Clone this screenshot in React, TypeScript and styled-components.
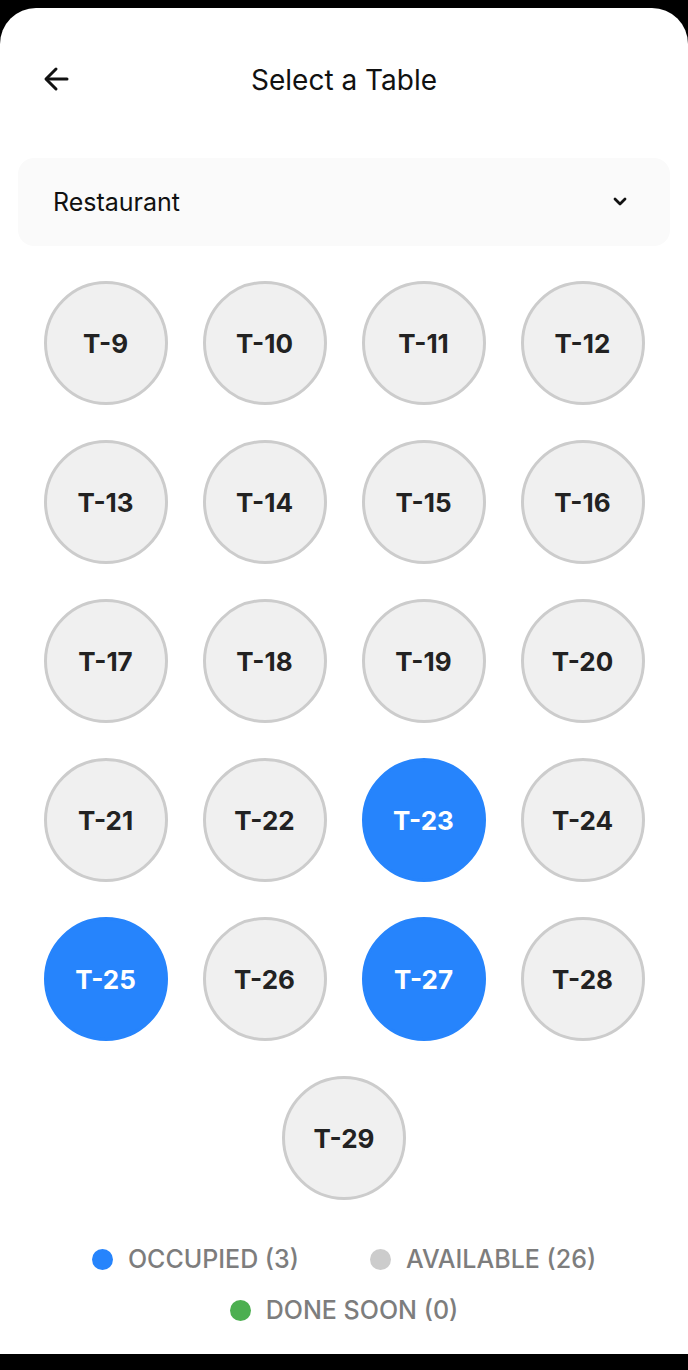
import styled, { createGlobalStyle } from 'styled-components';

const GlobalStyle = createGlobalStyle`
  body {
    margin: 0;
    background: #000;
    font-family: Inter, "Noto Sans", sans-serif;
  }
`;

const Sheet = styled.div`
  margin-top: 8px;
  height: 1346px;
  background: #fff;
  border-radius: 36px 36px 0 0;
  display: flex;
  flex-direction: column;`;

const Header = styled.div`
  height: 144px;
  display: flex;
  align-items: center;
  justify-content: center;
  position: relative;`;

const BackButton = styled.button`
  position: absolute;
  left: 43px;
  top: 58px;
  border: none;
  background: none;
  padding: 0;
  display: flex;`;

const Title = styled.h1`
  margin: 0;
  font-size: 28px;
  font-weight: 400;
  color: #111;`;

const Content = styled.div`
  padding: 6px 18px 0;
  display: flex;
  flex-direction: column;`;

const Dropdown = styled.div`
  height: 88px;
  background: #fafafa;
  border-radius: 16px;
  display: flex;
  align-items: center;
  justify-content: space-between;
  padding: 0 42px 0 35px;`;

const DropdownLabel = styled.span`
  font-size: 25px;
  color: #111;`;

const Grid = styled.div`
  margin-top: 35px;
  display: flex;
  flex-wrap: wrap;
  justify-content: center;
  gap: 35px;
  padding: 0 7px;`;

const TableCircle = styled.div<{ $occupied?: boolean }>`
  width: 124px;
  height: 124px;
  box-sizing: border-box;
  border-radius: 50%;
  display: flex;
  align-items: center;
  justify-content: center;
  font-size: 26px;
  font-weight: 700;
  background: ${(p) => (p.$occupied ? '#2684fc' : '#f0f0f0')};
  color: ${(p) => (p.$occupied ? '#fff' : '#222')};
  border: 3px solid ${(p) => (p.$occupied ? '#2684fc' : '#cccccc')};`;

const Legend = styled.div`
  margin-top: 44px;
  display: flex;
  flex-direction: column;
  align-items: center;
  gap: 21px;`;

const LegendRow = styled.div`
  display: flex;
  gap: 71px;
  justify-content: center;`;

const LegendItem = styled.div`
  display: flex;
  align-items: center;
  gap: 15px;
  font-size: 25px;
  font-weight: 500;
  color: #7d7d7d;
  line-height: 30px;`;

const Dot = styled.span<{ $color: string }>`
  width: 21px;
  height: 21px;
  border-radius: 50%;
  background: ${(p) => p.$color};`;

const occupied = [23, 25, 27];
const tables = Array.from({ length: 21 }, (_, i) => i + 9);

function App() {
  return (
    <>
      <GlobalStyle />
      <Sheet>
        <Header>
          <BackButton>
            <svg width="26" height="26" viewBox="0 0 26 26" fill="none" stroke="#111" strokeWidth="3" strokeLinecap="round" strokeLinejoin="round">
              <path d="M4 13H24" />
              <path d="M13 3L3 13L13 23" />
            </svg>
          </BackButton>
          <Title>Select a Table</Title>
        </Header>
        <Content>
          <Dropdown>
            <DropdownLabel>Restaurant</DropdownLabel>
            <svg width="16" height="12" viewBox="0 0 16 12" fill="none" stroke="#111" strokeWidth="2.8" strokeLinecap="round" strokeLinejoin="round">
              <path d="M3 3L8 8L13 3" />
            </svg>
          </Dropdown>
          <Grid>
            {tables.map((n) => (
              <TableCircle key={n} $occupied={occupied.includes(n)}>
                T-{n}
              </TableCircle>
            ))}
          </Grid>
          <Legend>
            <LegendRow>
              <LegendItem>
                <Dot $color="#2684fc" />
                OCCUPIED (3)
              </LegendItem>
              <LegendItem>
                <Dot $color="#cccccc" />
                AVAILABLE (26)
              </LegendItem>
            </LegendRow>
            <LegendRow>
              <LegendItem>
                <Dot $color="#4caf50" />
                DONE SOON (0)
              </LegendItem>
            </LegendRow>
          </Legend>
        </Content>
      </Sheet>
    </>
  );
}

export default App;
